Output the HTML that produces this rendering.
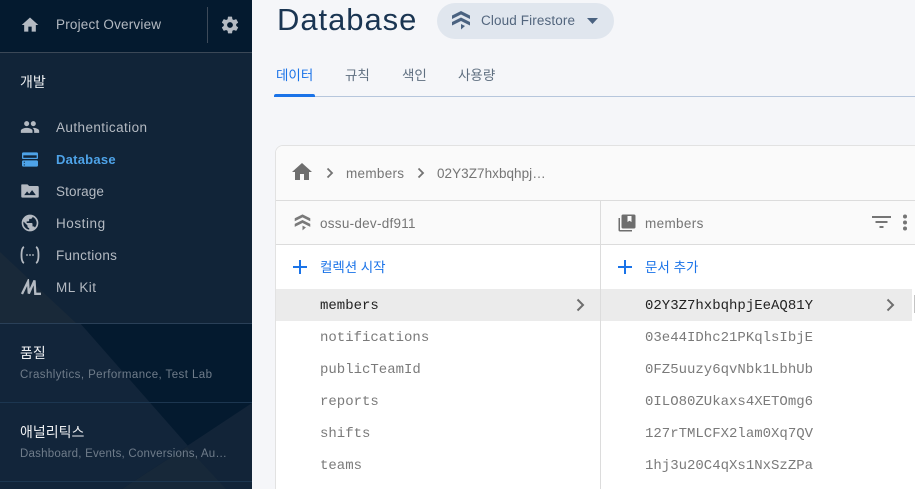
<!DOCTYPE html>
<html lang="ko"><head><meta charset="utf-8"><title>Database</title>
<style>
html,body{margin:0;padding:0;width:915px;height:489px;overflow:hidden;background:#f5f6f9}
body{position:relative;font-family:"Liberation Sans","Noto Sans CJK KR",sans-serif}
.a{position:absolute;white-space:nowrap}
svg{position:absolute;display:block}
.nav{left:56px;font-size:13.5px;line-height:18px;color:#b4bac2;letter-spacing:.4px}
.mono{font-family:"Liberation Mono","Noto Sans CJK KR",monospace;font-size:14px;line-height:18px;color:#7a7a7a}
.sec{left:20px;font-size:14px;line-height:18px;color:#eef0f2}
.sub{left:20px;font-size:11.5px;line-height:16px;color:#6f7c8a;letter-spacing:.42px}
.ko{font-size:13.5px;line-height:18px}
</style></head><body>

<!-- sidebar -->
<div class="a" style="left:0;top:0;width:252px;height:489px;overflow:hidden;background:#112438">
  <svg style="left:0;top:0" width="252" height="489">
    <rect y="323" width="252" height="166" fill="#041a2f"/>
    <path d="M0 252L76 323H0Z" fill="#192939"/>
    <path d="M0 323H80L226 489H0Z" fill="#12253a"/>
    <path d="M252 403V489H122Z" fill="#122438"/>
    <path d="M187 447L226 489H122Z" fill="#172839"/>
  </svg>
  <div class="a" style="left:0;top:0;width:252px;height:52px;background:#041a2f;border-bottom:1px solid #3b4857"></div>
  <div class="a" style="left:207px;top:7px;width:1px;height:36px;background:#3d4a59"></div>
  <div class="a" style="left:0;top:323px;width:252px;height:1px;background:#2a4058"></div>
  <div class="a" style="left:0;top:402px;width:252px;height:1px;background:#1c3650"></div>
  <div class="a" style="left:0;top:481px;width:252px;height:1px;background:#1c3650"></div>

  <svg style="left:20px;top:15px" width="20" height="20" viewBox="0 0 24 24" fill="#b4bac2"><path d="M10 20v-6h4v6h5v-8h3L12 3 2 12h3v8z"/></svg>
  <div class="a nav" style="top:16px;letter-spacing:.2px">Project Overview</div>
  <svg style="left:220px;top:15px" width="20" height="20" viewBox="0 0 24 24" fill="#b4bac2"><path d="M19.4 13c.04-.3.1-.65.1-1s-.06-.7-.1-1l2.1-1.65c.2-.15.25-.42.13-.64l-2-3.46c-.12-.22-.4-.3-.6-.22l-2.5 1c-.52-.4-1.08-.73-1.7-.98L14.5 2.42A.5.5 0 0 0 14 2h-4a.5.5 0 0 0-.5.42L9.13 5.05c-.62.25-1.18.59-1.7.98l-2.5-1c-.22-.08-.48 0-.6.22l-2 3.46c-.13.22-.07.49.12.64L4.57 11c-.04.32-.07.65-.07 1s.03.68.07 1l-2.11 1.65c-.2.15-.25.42-.13.64l2 3.46c.12.22.4.3.6.22l2.5-1c.52.4 1.08.73 1.7.98l.37 2.63c.04.24.25.42.5.42h4c.25 0 .46-.18.5-.42l.37-2.63c.62-.25 1.18-.59 1.7-.98l2.5 1c.22.08.48 0 .6-.22l2-3.46c.12-.22.07-.49-.12-.64zM12 15.5a3.5 3.5 0 1 1 0-7 3.5 3.5 0 0 1 0 7z"/></svg>

  <div class="a sec" style="top:73px">개발</div>

  <svg style="left:20px;top:117px" width="20" height="20" viewBox="0 0 24 24" fill="#b4bac2"><path d="M16 11c1.66 0 2.99-1.34 2.99-3S17.66 5 16 5s-3 1.34-3 3 1.34 3 3 3zm-8 0c1.66 0 2.99-1.34 2.99-3S9.66 5 8 5 5 6.34 5 8s1.34 3 3 3zm0 2c-2.33 0-7 1.17-7 3.5V19h14v-2.5C15 14.17 10.33 13 8 13zm8 0c-.29 0-.62.02-.97.05 1.16.84 1.97 1.97 1.97 3.45V19h6v-2.5c0-2.33-4.67-3.5-7-3.5z"/></svg>
  <div class="a nav" style="top:119px;letter-spacing:.42px">Authentication</div>

  <svg style="left:22px;top:151px" width="16" height="17" viewBox="0 0 18 18" fill="#4ea3e8"><rect x="0" y="1" width="18" height="7.500" rx="1.500"/><rect x="1.500" y="4.300" width="15" height="2.800" fill="#112438"/><rect x="0" y="10" width="18" height="7" rx="1.500"/><rect x="2" y="11.500" width="1.200" height="1.200" fill="#112438"/><rect x="2" y="14.500" width="1.200" height="1.200" fill="#112438"/></svg>
  <div class="a nav" style="top:151px;color:#4ea3e8;font-weight:bold;font-size:13px;letter-spacing:.25px">Database</div>

  <svg style="left:20px;top:181px" width="20" height="20" viewBox="0 0 24 24" fill="#b4bac2"><path d="M2 4h7l2 2h10a1.500 1.500 0 0 1 1.500 1.500V18.500A1.500 1.500 0 0 1 21 20H3a1.500 1.500 0 0 1-1.500-1.500V5.500A1.500 1.500 0 0 1 2 4zm3 13h14l-4.500-6-3.500 4.500-2.500-3z" fill-rule="evenodd"/></svg>
  <div class="a nav" style="top:183px;letter-spacing:.1px">Storage</div>

  <svg style="left:20px;top:213px" width="20" height="20" viewBox="0 0 24 24" fill="#b4bac2"><path d="M12 2a10 10 0 1 0 0 20 10 10 0 0 0 0-20zM4 12c0-.6.07-1.200.2-1.800L9 15v1c0 1.100.9 2 2 2v1.930A8 8 0 0 1 4 12zm13.900 5.400c-.26-.8-1-1.400-1.900-1.400h-1v-3c0-.55-.45-1-1-1H8v-2h2c.55 0 1-.45 1-1V7h2c1.100 0 2-.9 2-2v-.4a8 8 0 0 1 2.900 12.800z"/></svg>
  <div class="a nav" style="top:215px;letter-spacing:.55px">Hosting</div>

  <svg style="left:20px;top:245px" width="20" height="20" viewBox="0 0 20 20" fill="none" stroke="#b4bac2" stroke-width="1.800"><path d="M4 2Q1.500 3 1.500 10T4 18M16 2Q18.500 3 18.500 10T16 18"/><path d="M6.300 10h1.400M9.300 10h1.400M12.300 10h1.400" stroke-width="1.800"/></svg>
  <div class="a nav" style="top:247px;letter-spacing:.3px">Functions</div>

  <svg style="left:21px;top:279px" width="20" height="16" viewBox="0 0 20 16" fill="none" stroke="#b4bac2" stroke-width="2.300"><path d="M1 15 7 2.500 7.800 14.500 13.500 1.500l.8 13.300H20"/></svg>
  <div class="a nav" style="top:279px;letter-spacing:.45px">ML Kit</div>

  <div class="a sec" style="top:344px">품질</div>
  <div class="a sub" style="top:367px">Crashlytics, Performance, Test Lab</div>
  <div class="a sec" style="top:423px">애널리틱스</div>
  <div class="a sub" style="top:446px;letter-spacing:.22px">Dashboard, Events, Conversions, Au…</div>
</div>

<!-- header -->
<div class="a" style="left:277px;top:0;font-size:31px;line-height:40px;color:#1a3552;letter-spacing:.95px">Database</div>
<div class="a" style="left:437px;top:3px;width:177px;height:36px;border-radius:18px;background:#e0e6ee"></div>
<svg style="left:450px;top:10px" width="22" height="22" viewBox="0 0 22 22" fill="#4a6280"><path d="M11 1 20 5.500V9L11 4.500 2 9V5.500zM11 7.500 20 12v3.500L11 11 2 15.500V12zM11 14l4 2-4 3.500z"/></svg>
<div class="a" style="left:481px;top:12px;font-size:13.5px;line-height:18px;color:#53667e;letter-spacing:.12px">Cloud Firestore</div>
<svg style="left:587px;top:18px" width="11" height="6" viewBox="0 0 11 6" fill="#4a6280"><path d="M0 0h11L5.500 6z"/></svg>

<!-- tabs -->
<div class="a ko" style="left:276px;top:67px;color:#1a73e8">데이터</div>
<div class="a ko" style="left:345px;top:67px;color:#5f6f80">규칙</div>
<div class="a ko" style="left:402px;top:67px;color:#5f6f80">색인</div>
<div class="a ko" style="left:458px;top:67px;color:#5f6f80">사용량</div>
<div class="a" style="left:274px;top:96px;width:641px;height:1px;background:#b6c6dc"></div>
<div class="a" style="left:274px;top:94px;width:41px;height:3px;border-radius:2px 2px 0 0;background:#1a73e8"></div>

<!-- card -->
<div class="a" style="left:275px;top:145px;width:660px;height:360px;background:#fff;border:1px solid #e2e2e2;border-radius:8px 0 0 0;box-sizing:border-box;overflow:hidden"></div>
<div class="a" style="left:276px;top:146px;width:639px;height:54px;background:#fafafa;border-radius:7px 0 0 0;border-bottom:1px solid #dcdcdc"></div>
<div class="a" style="left:276px;top:201px;width:639px;height:43px;background:#fafafa;border-bottom:1px solid #dcdcdc"></div>
<div class="a" style="left:276px;top:289px;width:324px;height:32px;background:#ebebeb"></div>
<div class="a" style="left:601px;top:289px;width:311px;height:32px;background:#ebebeb"></div>
<div class="a" style="left:600px;top:201px;width:1px;height:288px;background:#dcdcdc"></div>
<div class="a" style="left:914px;top:295px;width:1px;height:18px;background:#c4c4c4"></div>

<!-- breadcrumb -->
<svg style="left:290px;top:160px" width="24" height="24" viewBox="0 0 24 24" fill="#6e6e6e"><path d="M10 20v-6h4v6h5v-8h3L12 3 2 12h3v8z"/></svg>
<svg style="left:326px;top:167px" width="8" height="12" viewBox="0 0 8 12" fill="none" stroke="#737373" stroke-width="1.800"><path d="M1.500 1.500 6 6l-4.500 4.500"/></svg>
<div class="a" style="left:346px;top:165px;font-size:13.5px;line-height:18px;color:#757575;letter-spacing:.3px">members</div>
<svg style="left:417px;top:167px" width="8" height="12" viewBox="0 0 8 12" fill="none" stroke="#737373" stroke-width="1.800"><path d="M1.500 1.500 6 6l-4.500 4.500"/></svg>
<div class="a" style="left:437px;top:165px;font-size:13.5px;line-height:18px;color:#757575;letter-spacing:.05px">02Y3Z7hxbqhpj…</div>

<!-- col heads -->
<svg style="left:293px;top:213px" width="19" height="20" viewBox="0 0 22 22" fill="#7a7a7a"><path d="M11 1 20 5.500V9L11 4.500 2 9V5.500zM11 7.500 20 12v3.500L11 11 2 15.500V12zM11 14l4 2-4 3.500z"/></svg>
<div class="a" style="left:320px;top:215px;font-size:13.5px;line-height:18px;color:#757575;letter-spacing:.27px">ossu-dev-df911</div>
<svg style="left:617px;top:213px" width="20" height="20" viewBox="0 0 20 20" fill="#6e6e6e"><path d="M6 1.500h11a1.500 1.500 0 0 1 1.500 1.500v11a1.500 1.500 0 0 1-1.500 1.500H6A1.500 1.500 0 0 1 4.500 14V3A1.500 1.500 0 0 1 6 1.500zM10.500 3v6l2-1.300 2 1.300V3z" fill-rule="evenodd"/><path d="M1.500 5H3v12h12v1.500H3A1.500 1.500 0 0 1 1.500 17z"/></svg>
<div class="a" style="left:645px;top:215px;font-size:13.5px;line-height:18px;color:#757575;letter-spacing:.35px">members</div>
<svg style="left:872px;top:215px" width="19" height="14" viewBox="0 0 19 14" fill="#757575"><path d="M0 1h19v2H0zM3.500 6h12v2h-12zM7.500 11h4v2h-4z"/></svg>
<svg style="left:902px;top:214px" width="6" height="17" viewBox="0 0 6 17" fill="#757575"><circle cx="3" cy="2.500" r="2"/><circle cx="3" cy="8.500" r="2"/><circle cx="3" cy="14.500" r="2"/></svg>

<!-- add rows -->
<svg style="left:293px;top:260px" width="14" height="14" viewBox="0 0 14 14" fill="#1a73e8"><path d="M6 0h2v6h6v2H8v6H6V8H0V6h6z"/></svg>
<div class="a ko" style="left:320px;top:259px;color:#1a73e8;letter-spacing:-.05px">컬렉션 시작</div>
<svg style="left:618px;top:260px" width="14" height="14" viewBox="0 0 14 14" fill="#1a73e8"><path d="M6 0h2v6h6v2H8v6H6V8H0V6h6z"/></svg>
<div class="a ko" style="left:645px;top:259px;color:#1a73e8">문서 추가</div>

<!-- lists -->
<div class="a mono" style="left:320px;top:297px;color:#222">members</div>
<div class="a mono" style="left:320px;top:329px">notifications</div>
<div class="a mono" style="left:320px;top:361px">publicTeamId</div>
<div class="a mono" style="left:320px;top:393px">reports</div>
<div class="a mono" style="left:320px;top:425px">shifts</div>
<div class="a mono" style="left:320px;top:457px">teams</div>
<svg style="left:576px;top:298px" width="9" height="14" viewBox="0 0 9 14" fill="none" stroke="#6e6e6e" stroke-width="2"><path d="M1.500 1.500 7 7l-5.500 5.500"/></svg>

<div class="a mono" style="left:645px;top:297px;color:#222">02Y3Z7hxbqhpjEeAQ81Y</div>
<div class="a mono" style="left:645px;top:329px">03e44IDhc21PKqlsIbjE</div>
<div class="a mono" style="left:645px;top:361px">0FZ5uuzy6qvNbk1LbhUb</div>
<div class="a mono" style="left:645px;top:393px">0ILO80ZUkaxs4XETOmg6</div>
<div class="a mono" style="left:645px;top:425px">127rTMLCFX2lam0Xq7QV</div>
<div class="a mono" style="left:645px;top:457px">1hj3u20C4qXs1NxSzZPa</div>
<svg style="left:886px;top:298px" width="9" height="14" viewBox="0 0 9 14" fill="none" stroke="#6e6e6e" stroke-width="2"><path d="M1.500 1.500 7 7l-5.500 5.500"/></svg>

</body></html>
